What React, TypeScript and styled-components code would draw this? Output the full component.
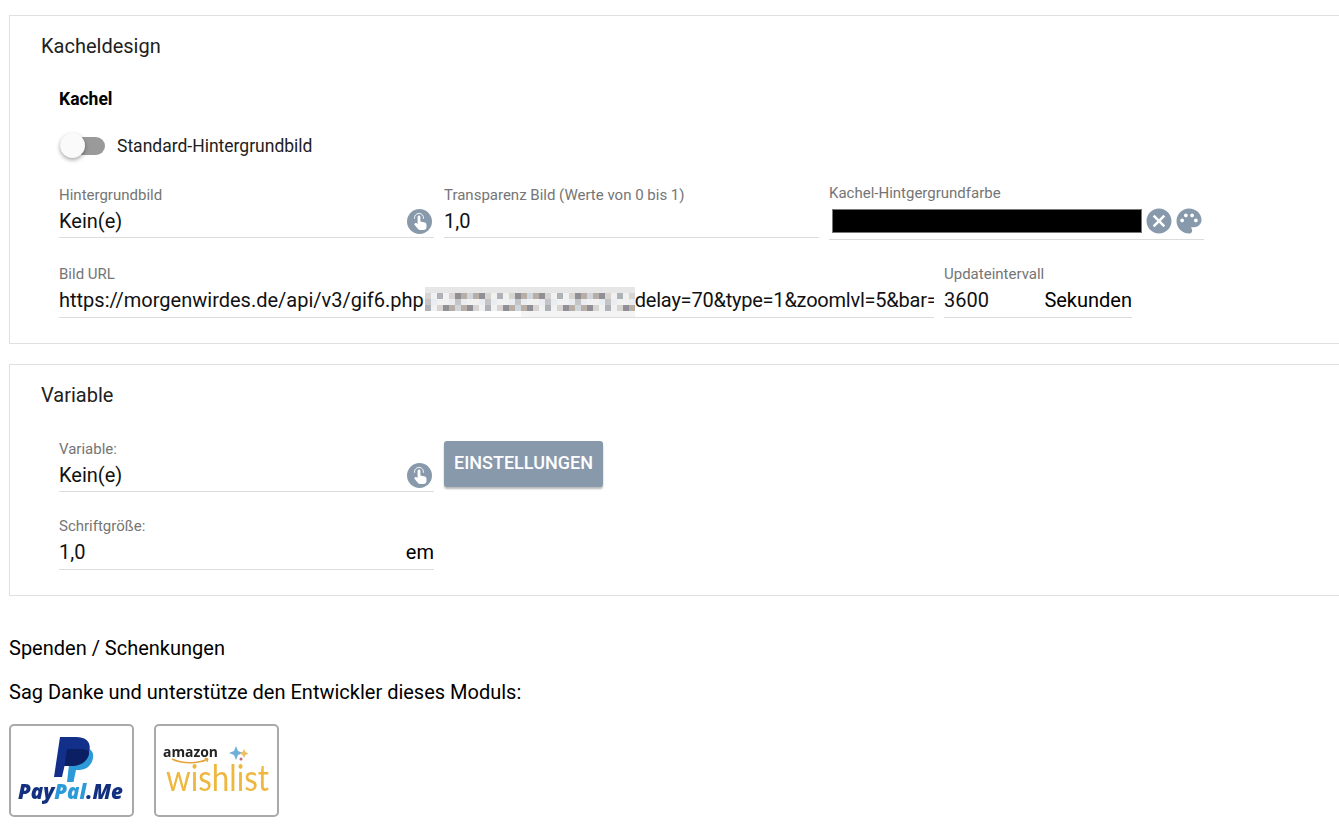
import { createGlobalStyle, styled } from "styled-components";
import { MdCancel, MdPalette } from "react-icons/md";

const GlobalStyle = createGlobalStyle`
  html, body {
    margin: 0;
    padding: 0;
    background: #fff;
    overflow: hidden;
    font-family: Roboto, "Liberation Sans", sans-serif;
    color: #000;
  }
`;

const Page = styled.div`
  width: 1339px;
  height: 839px;
  overflow: hidden;
  padding: 15px 0 0 9px;
  box-sizing: border-box;
`;

const Panel = styled.section`
  width: 1400px;
  box-sizing: border-box;
  border: 1px solid #e0e0e0;
  padding: 18px 0 0 31px;
  margin-bottom: 20px;
`;

const PanelTitle = styled.h2`
  margin: 0;
  font-size: 20px;
  font-weight: 400;
  line-height: 24px;
  color: #212121;
`;

const PanelBody = styled.div<{ $top: number; $height: number }>`
  margin: ${(p) => p.$top}px 0 0 18px;
  height: ${(p) => p.$height}px;
`;

const SubTitle = styled.h3`
  margin: 0 0 23px;
  font-size: 17.5px;
  font-weight: 700;
  line-height: 21px;
`;

const SwitchRow = styled.div`
  display: flex;
  align-items: center;
  gap: 12px;
  height: 26px;
  margin-bottom: 28px;
  padding-left: 1px;
  font-size: 17.5px;
  color: #212121;
`;

const SwitchTrack = styled.div`
  position: relative;
  width: 45px;
  height: 18px;
  border-radius: 9px;
  background: #9a9a9a;
`;

const SwitchKnob = styled.div`
  position: absolute;
  left: 0;
  top: -4px;
  width: 25px;
  height: 25px;
  border-radius: 50%;
  background: #fafafa;
  box-shadow: 0 2px 4px rgba(0, 0, 0, 0.35);
`;

const FieldRow = styled.div<{ $gap: number }>`
  display: flex;
  align-items: flex-start;
  gap: 10px;
  margin-bottom: ${(p) => p.$gap}px;
`;

const Field = styled.div<{ $width: number }>`
  width: ${(p) => p.$width}px;
  flex: none;
  min-width: 0;
`;

const ColorField = styled(Field)`
  margin-top: -2px;
`;

const FieldLabel = styled.div`
  font-size: 15px;
  line-height: 16px;
  color: #757575;
`;

const FieldValue = styled.div<{ $tall?: boolean }>`
  display: flex;
  align-items: center;
  height: ${(p) => (p.$tall ? 36 : 35)}px;
  padding-top: ${(p) => (p.$tall ? 1 : 2)}px;
  box-sizing: border-box;
  border-bottom: 1px solid #dcdcdc;
  font-size: 20px;
  white-space: nowrap;
  overflow: hidden;
  color: #111;
`;

const ValueText = styled.span`
  flex: 1;
  min-width: 0;
  display: flex;
  align-items: center;
`;

const UrlTail = styled.span`
  letter-spacing: -0.22px;
`;

const Unit = styled.span`
  flex: none;
  color: #000;
`;

const ColorValue = styled(FieldValue)`
  height: 39px;
  padding-left: 3px;
`;

const ColorSwatch = styled.div`
  flex: none;
  width: 310px;
  height: 24px;
  margin-right: 2px;
  box-sizing: border-box;
  background: #000;
  border: 1px solid #777;
`;

const IconSlot = styled.span`
  display: inline-flex;
  flex: none;
  color: #8799ab;
`;

const TouchSlot = styled(IconSlot)`
  margin-right: 2px;
`;

const SettingsButton = styled.button`
  height: 46px;
  width: 159px;
  padding: 0 0 3px;
  border: none;
  border-radius: 3px;
  background: #8799ab;
  color: #fff;
  font-family: inherit;
  font-size: 18px;
  font-weight: 500;
  box-shadow: 0 2px 2px rgba(0, 0, 0, 0.28);
`;

const DonationTitle = styled.p`
  margin: 40px 0 0;
  font-size: 20px;
  line-height: 24px;
`;

const DonationText = styled.p`
  margin: 20px 0 0;
  font-size: 20px;
  line-height: 24px;
`;

const DonationLinks = styled.div`
  display: flex;
  gap: 20px;
  margin-top: 20px;
`;

const DonationLink = styled.a`
  display: block;
  width: 125px;
  height: 93px;
  box-sizing: border-box;
  border: 2px solid #a9a9a9;
  border-radius: 5px;
  overflow: hidden;
  svg {
    display: block;
    filter: blur(0.4px);
  }
`;

const TouchIcon = () => (
  <svg width="25" height="25" viewBox="0 0 25 25">
    <circle cx="12.5" cy="12.5" r="12.5" fill="#8799ab" />
    <path
      fill="#fff"
      d="M10.6 8a1.400 1.400 0 0 1 2.800 0v4.500l4.400 1c1.100.3 1.700 1.100 1.700 2.200v2.300c0 1.700-1.300 3.100-3 3.100h-3.300c-.9 0-1.700-.4-2.200-1.100l-3.900-4.800.7-.7c.5-.5 1.200-.6 1.800-.2l1 .7z"
    />
    <path fill="none" stroke="#fff" strokeWidth="0.9" d="M7.600 9.800a4.500 4.500 0 1 1 8.800 0" />
  </svg>
);

const mosaicColors = ["#f1f1f1", "#d8d4d2", "#c4c4c6", "#aeb2b6", "#e9edf1", "#b9aea6", "#8f8f95", "#f6f6f6", "#cfd6dc", "#9d9a9c"];

// stand-in for the pixelated part of the url, left block is one row shorter
const Mosaic = () => {
  const cells = [];
  for (let row = 0; row < 5; row++) {
    for (let col = 0; col < 35; col++) {
      if (col < 16 && row === 4) continue;
      const n = (col * col * 7 + row * 31 + col * 11 + row * row * col) % 10;
      const fill = row === 4 ? "#f4f4f4" : row === 0 ? (n % 2 ? "#f7f7f7" : "#e6e6e6") : mosaicColors[n];
      cells.push(<rect key={`${row}-${col}`} x={col * 6 + 1} y={row * 6} width="6" height="6" fill={fill} />);
    }
  }
  return (
    <svg width="211" height="30" viewBox="0 0 211 30" style={{ flex: "none", marginTop: 3 }}>
      {cells}
    </svg>
  );
};

const PayPalLogo = () => (
  <svg width="121" height="89" viewBox="0 0 121 89">
    <path fill="#2c9ad9" d="M60 22h13c7 0 10 4 9 10-1.500 8-7 12-14 12h-3l-2.500 12H56z" />
    <path fill="#12308a" d="M49 11h16c10 0 15 5 13.500 13-2 10-9 16-19 16h-6l-2.500 11H43z" />
    <path fill="#0b1f63" d="M56 23h16c5 1 7 3 5.500 7-3 7-9 10-18 10h-6z" />
    <text
      x="7"
      y="73"
      fontFamily="Open Sans, sans-serif"
      fontWeight="800"
      fontStyle="italic"
      fontSize="21"
      textLength="105"
      lengthAdjust="spacingAndGlyphs"
    >
      <tspan fill="#12307f">Pay</tspan>
      <tspan fill="#2c9ad9">Pal</tspan>
      <tspan fill="#12307f">.Me</tspan>
    </text>
  </svg>
);

const WishlistLogo = () => (
  <svg width="121" height="89" viewBox="0 0 121 89">
    <text
      x="7"
      y="31"
      fontFamily="Open Sans, sans-serif"
      fontWeight="700"
      fontSize="15"
      fill="#222"
      textLength="55"
      lengthAdjust="spacingAndGlyphs"
    >
      amazon
    </text>
    <path d="M16 33c10 5 26 5 36 0" fill="none" stroke="#e6a33a" strokeWidth="1.500" />
    <path d="M52 33l-3.500 -1M52 33l-1 3" stroke="#e6a33a" strokeWidth="1.200" />
    <path fill="#6fb0d8" d="M80 20l2 5 5 2-5 2-2 5-2-5-5-2 5-2z" />
    <path fill="#eec061" d="M88 23l1.500 3 3 1.500-3 1.500-1.500 3-1.500-3-3-1.500 3-1.500z" />
    <circle cx="85" cy="33" r="1.500" fill="#b86a80" />
    <text
      x="10"
      y="65"
      fontFamily="Lato, sans-serif"
      fontWeight="400"
      fontSize="36"
      fill="#eeb840"
      textLength="103"
      lengthAdjust="spacingAndGlyphs"
    >
      wishlist
    </text>
  </svg>
);

const App = () => (
  <Page>
    <GlobalStyle />
    <Panel>
      <PanelTitle>Kacheldesign</PanelTitle>
      <PanelBody $top={31} $height={254}>
        <SubTitle>Kachel</SubTitle>
        <SwitchRow>
          <SwitchTrack>
            <SwitchKnob />
          </SwitchTrack>
          Standard-Hintergrundbild
        </SwitchRow>
        <FieldRow $gap={26}>
          <Field $width={375}>
            <FieldLabel>Hintergrundbild</FieldLabel>
            <FieldValue>
              <ValueText>Kein(e)</ValueText>
              <TouchSlot>
                <TouchIcon />
              </TouchSlot>
            </FieldValue>
          </Field>
          <Field $width={375}>
            <FieldLabel>Transparenz Bild (Werte von 0 bis 1)</FieldLabel>
            <FieldValue>
              <ValueText>1,0</ValueText>
            </FieldValue>
          </Field>
          <ColorField $width={375}>
            <FieldLabel>Kachel-Hintgergrundfarbe</FieldLabel>
            <ColorValue>
              <ColorSwatch />
              <IconSlot>
                <MdCancel size={30} />
              </IconSlot>
              <IconSlot>
                <MdPalette size={30} />
              </IconSlot>
            </ColorValue>
          </ColorField>
        </FieldRow>
        <FieldRow $gap={0}>
          <Field $width={875}>
            <FieldLabel>Bild URL</FieldLabel>
            <FieldValue $tall>
              <ValueText>
                https://morgenwirdes.de/api/v3/gif6.php
                <Mosaic />
                <UrlTail>delay=70&amp;type=1&amp;zoomlvl=5&amp;bar=</UrlTail>
              </ValueText>
            </FieldValue>
          </Field>
          <Field $width={188}>
            <FieldLabel>Updateintervall</FieldLabel>
            <FieldValue $tall>
              <ValueText>3600</ValueText>
              <Unit>Sekunden</Unit>
            </FieldValue>
          </Field>
        </FieldRow>
      </PanelBody>
    </Panel>
    <Panel>
      <PanelTitle>Variable</PanelTitle>
      <PanelBody $top={34} $height={154}>
        <FieldRow $gap={26}>
          <Field $width={375}>
            <FieldLabel>Variable:</FieldLabel>
            <FieldValue>
              <ValueText>Kein(e)</ValueText>
              <TouchSlot>
                <TouchIcon />
              </TouchSlot>
            </FieldValue>
          </Field>
          <SettingsButton>EINSTELLUNGEN</SettingsButton>
        </FieldRow>
        <Field $width={375}>
          <FieldLabel>Schriftgröße:</FieldLabel>
          <FieldValue $tall>
            <ValueText>1,0</ValueText>
            <Unit>em</Unit>
          </FieldValue>
        </Field>
      </PanelBody>
    </Panel>
    <DonationTitle>Spenden / Schenkungen</DonationTitle>
    <DonationText>Sag Danke und unterstütze den Entwickler dieses Moduls:</DonationText>
    <DonationLinks>
      <DonationLink>
        <PayPalLogo />
      </DonationLink>
      <DonationLink>
        <WishlistLogo />
      </DonationLink>
    </DonationLinks>
  </Page>
);

export default App;
